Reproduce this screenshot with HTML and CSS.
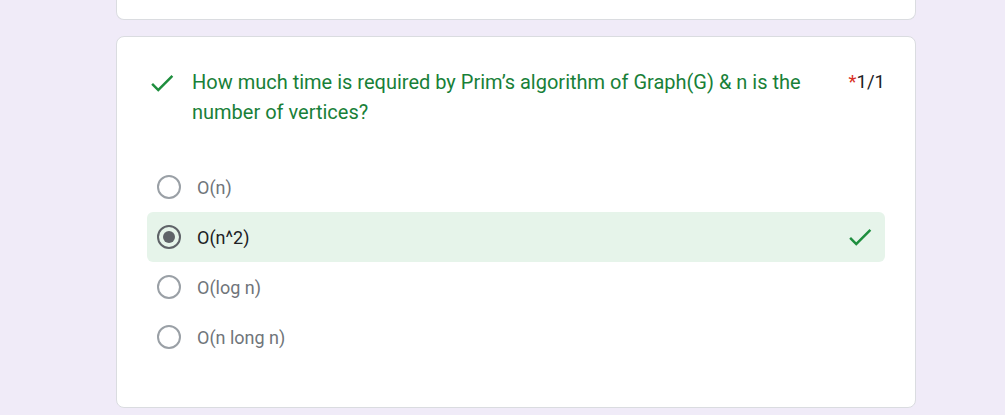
FILE: index.html
```html
<!DOCTYPE html>
<html>
<head>
<meta charset="utf-8">
<link rel="stylesheet" href="styles.css">
</head>
<body>
<div class="page">
  <div class="card card-top"></div>
  <div class="card card-q">
    <div class="q-head">
      <svg class="q-check" viewBox="0 0 24 24" width="30" height="30"><path d="M9 16.2L4.8 12l-1.4 1.4L9 19 21 7l-1.4-1.4L9 16.2z" fill="#1e8e3e"/></svg>
      <div class="q-title">How much time is required by Prim’s algorithm of Graph(G) &amp; n is the number of vertices?</div>
      <div class="q-score"><span class="req">*</span>1/1</div>
    </div>
    <div class="options">
      <div class="opt">
        <span class="radio"></span>
        <span class="opt-label">O(n)</span>
      </div>
      <div class="opt opt-correct">
        <span class="radio radio-on"><span class="dot"></span></span>
        <span class="opt-label opt-label-on">O(n^2)</span>
        <svg class="opt-check" viewBox="0 0 24 24" width="30" height="30"><path d="M9 16.2L4.8 12l-1.4 1.4L9 19 21 7l-1.4-1.4L9 16.2z" fill="#1e8e3e"/></svg>
      </div>
      <div class="opt">
        <span class="radio"></span>
        <span class="opt-label">O(log n)</span>
      </div>
      <div class="opt">
        <span class="radio"></span>
        <span class="opt-label">O(n long n)</span>
      </div>
    </div>
  </div>
</div>
</body>
</html>
```
FILE: styles.css
```css
html, body {
  margin: 0;
  padding: 0;
  background: #f0ebf8;
  font-family: Roboto, "Liberation Sans", Arial, sans-serif;
}
.page {
  width: 800px;
  margin-left: 116px;
  display: flex;
  flex-direction: column;
  gap: 16px;
}
.card {
  background: #fff;
  border: 1px solid #dadce0;
  border-radius: 8px;
  box-sizing: border-box;
}
.card-top {
  height: 20px;
  border-top: none;
  border-radius: 0 0 8px 8px;
}
.card-q {
  height: 372px;
  padding: 30px 30px 0 30px;
}
.q-head {
  display: flex;
  align-items: flex-start;
}
.q-check {
  flex: none;
  margin: 1px 15px 0 0;
}
.q-title {
  flex: 1;
  color: #188038;
  font-size: 20px;
  line-height: 30px;
}
.q-score {
  flex: none;
  margin-left: 30px;
  font-size: 18.5px;
  line-height: 30px;
  color: #202124;
}
.req {
  color: #d93025;
}
.options {
  margin-top: 35px;
  display: flex;
  flex-direction: column;
}
.opt {
  height: 50px;
  display: flex;
  align-items: center;
  padding-left: 10px;
  border-radius: 6px;
}
.opt-correct {
  background: #e6f4ea;
  padding-right: 10px;
}
.radio {
  width: 24px;
  height: 24px;
  border: 2px solid #9aa0a6;
  border-radius: 50%;
  box-sizing: border-box;
  display: flex;
  align-items: center;
  justify-content: center;
  flex: none;
}
.radio-on {
  border-color: #5f6368;
}
.dot {
  width: 12px;
  height: 12px;
  border-radius: 50%;
  background: #5f6368;
}
.opt-label {
  margin-left: 16px;
  font-size: 18px;
  color: #70757a;
}
.opt-label-on {
  color: #202124;
  flex: 1;
}
.opt-check {
  flex: none;
}
```
